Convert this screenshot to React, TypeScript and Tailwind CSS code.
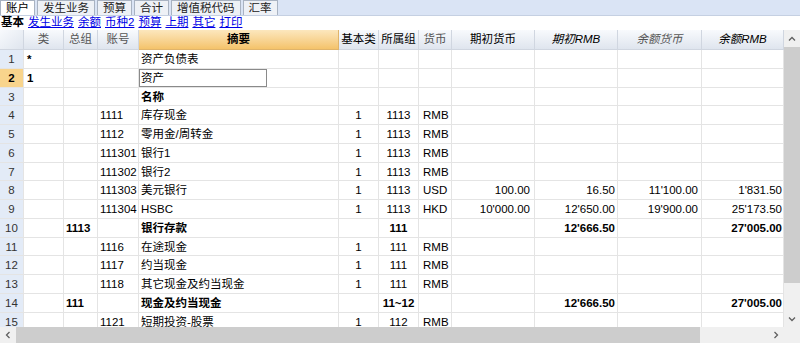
import React from "react";

type Row = {
  n: number;
  lei?: string;
  grp0?: string;
  acc?: string;
  desc?: string;
  bc?: string;
  grp?: string;
  cur?: string;
  op?: string;
  opR?: string;
  bal?: string;
  balR?: string;
  bold?: boolean;
  sel?: boolean;
};

const rows: Row[] = [
  { n: 1, lei: "*", desc: "资产负债表" },
  { n: 2, lei: "1", desc: "资产", sel: true },
  { n: 3, desc: "名称", bold: true },
  { n: 4, acc: "1111", desc: "库存现金", bc: "1", grp: "1113", cur: "RMB" },
  { n: 5, acc: "1112", desc: "零用金/周转金", bc: "1", grp: "1113", cur: "RMB" },
  { n: 6, acc: "111301", desc: "银行1", bc: "1", grp: "1113", cur: "RMB" },
  { n: 7, acc: "111302", desc: "银行2", bc: "1", grp: "1113", cur: "RMB" },
  {
    n: 8,
    acc: "111303",
    desc: "美元银行",
    bc: "1",
    grp: "1113",
    cur: "USD",
    op: "100.00",
    opR: "16.50",
    bal: "11'100.00",
    balR: "1'831.50",
  },
  {
    n: 9,
    acc: "111304",
    desc: "HSBC",
    bc: "1",
    grp: "1113",
    cur: "HKD",
    op: "10'000.00",
    opR: "12'650.00",
    bal: "19'900.00",
    balR: "25'173.50",
  },
  { n: 10, grp0: "1113", desc: "银行存款", grp: "111", opR: "12'666.50", balR: "27'005.00", bold: true },
  { n: 11, acc: "1116", desc: "在途现金", bc: "1", grp: "111", cur: "RMB" },
  { n: 12, acc: "1117", desc: "约当现金", bc: "1", grp: "111", cur: "RMB" },
  { n: 13, acc: "1118", desc: "其它现金及约当现金", bc: "1", grp: "111", cur: "RMB" },
  { n: 14, grp0: "111", desc: "现金及约当现金", grp: "11~12", opR: "12'666.50", balR: "27'005.00", bold: true },
  { n: 15, acc: "1121", desc: "短期投资-股票", bc: "1", grp: "112", cur: "RMB" },
];

const tabs = ["账户", "发生业务", "预算", "合计", "增值税代码", "汇率"];
const views = ["发生业务", "余额", "币种2", "预算", "上期", "其它", "打印"];

const cols = "grid grid-cols-[24px_40px_34px_41px_200px_40px_40px_33px_83px_83px_84px_82px]";
const cell = "border-r border-b border-[#e4e4e4] h-[18.75px] leading-[18px] whitespace-nowrap overflow-hidden";
const hcell =
  "border-r border-b border-[#d0d6e0] h-[20px] leading-[19px] text-center bg-gradient-to-b from-[#f8fafd] to-[#dfe5ee] whitespace-nowrap";

const App: React.FC = () => {
  return (
    <div
      className="w-[800px] h-[343px] bg-white flex flex-col overflow-hidden text-[11.5px] text-black"
      style={{ fontFamily: '"Liberation Sans", Arial, "Noto Sans CJK SC", sans-serif' }}
    >
      {/* tabs */}
      <div className="h-[16px] bg-[#dae4f5] border-b border-[#c5d0e2] flex items-end gap-[2px] pl-0">
        {tabs.map((t, i) => (
          <div
            key={t}
            className={`h-[15px] leading-[14px] px-[5px] border border-b-0 border-[#a9b3c2] ${
              i === 0 ? "bg-white" : "bg-[#eef1f6] text-[#222]"
            }`}
          >
            {t}
          </div>
        ))}
      </div>

      {/* sub views */}
      <div className="h-[14px] leading-[13px] flex gap-[4px] pl-[1px]">
        <span className="font-bold">基本</span>
        {views.map((v) => (
          <span key={v} className="text-[#0000e6] underline">
            {v}
          </span>
        ))}
      </div>

      <div className="flex-1 flex min-h-0">
        <div className="w-[784px] flex flex-col min-h-0">
          <div className="flex-1 overflow-hidden">
            {/* header */}
            <div className={cols}>
              <div className={`${hcell} bg-gradient-to-br from-[#eef3fa] to-[#d3deee]`}></div>
              <div className={`${hcell} text-[#555]`}>类</div>
              <div className={`${hcell} text-[#555]`}>总组</div>
              <div className={`${hcell} text-[#555]`}>账号</div>
              <div className="border-r border-b border-[#e0b46a] h-[20px] leading-[19px] text-center font-bold bg-gradient-to-b from-[#fce7bd] to-[#f4c36a]">
                摘要
              </div>
              <div className={hcell}>基本类</div>
              <div className={hcell}>所属组</div>
              <div className={`${hcell} text-[#555]`}>货币</div>
              <div className={hcell}>期初货币</div>
              <div className={`${hcell} italic`}>期初RMB</div>
              <div className={`${hcell} italic text-[#555]`}>余额货币</div>
              <div className={`${hcell} italic`}>余额RMB</div>
            </div>

            {rows.map((r) => (
              <div key={r.n} className={`${cols} ${r.bold ? "font-bold" : ""}`}>
                <div
                  className={`${cell} text-center border-[#cfd9e8] ${
                    r.sel ? "bg-[#f8d48c] font-bold" : "bg-[#e3ebf7] text-[#333] font-normal"
                  }`}
                >
                  {r.n}
                </div>
                <div className={`${cell} pl-[3px] font-bold`}>{r.lei}</div>
                <div className={`${cell} pl-[2px]`}>{r.grp0}</div>
                <div className={`${cell} pl-[2px]`}>{r.acc}</div>
                <div className={`${cell} pl-[2px]`}>
                  {r.sel ? (
                    <div className="w-[128px] -ml-[2px] h-full border border-[#8a8a8a] pl-[1px] leading-[16px]">
                      {r.desc}
                    </div>
                  ) : (
                    r.desc
                  )}
                </div>
                <div className={`${cell} text-center`}>{r.bc}</div>
                <div className={`${cell} text-center`}>{r.grp}</div>
                <div className={`${cell} pl-[4px]`}>{r.cur}</div>
                <div className={`${cell} text-right pr-[4px]`}>{r.op}</div>
                <div className={`${cell} text-right pr-[2px]`}>{r.opR}</div>
                <div className={`${cell} text-right pr-[3px]`}>{r.bal}</div>
                <div className={`${cell} text-right pr-[1px]`}>{r.balR}</div>
              </div>
            ))}
          </div>

          {/* horizontal scrollbar */}
          <div className="h-[16px] flex bg-[#f0f0f0] text-[#555]">
            <div className="w-[16px] flex items-center justify-center">
              <svg width="8" height="8" viewBox="0 0 8 8">
                <path d="M5.5 1 L2.5 4 L5.5 7" fill="none" stroke="#606060" strokeWidth="1.3" />
              </svg>
            </div>
            <div className="w-[684px] h-full bg-[#cdcdcd]"></div>
            <div className="flex-1"></div>
            <div className="w-[16px] flex items-center justify-center">
              <svg width="8" height="8" viewBox="0 0 8 8">
                <path d="M2.5 1 L5.5 4 L2.5 7" fill="none" stroke="#606060" strokeWidth="1.3" />
              </svg>
            </div>
          </div>
        </div>

        {/* vertical scrollbar */}
        <div className="w-[16px] flex flex-col">
          <div className="flex-1 flex flex-col bg-[#f0f0f0]">
            <div className="h-[17px] flex items-center justify-center">
              <svg width="8" height="8" viewBox="0 0 8 8">
                <path d="M1 5.5 L4 2.5 L7 5.5" fill="none" stroke="#606060" strokeWidth="1.3" />
              </svg>
            </div>
            <div className="h-[236px] bg-[#cdcdcd]"></div>
            <div className="flex-1"></div>
            <div className="h-[17px] flex items-center justify-center">
              <svg width="8" height="8" viewBox="0 0 8 8">
                <path d="M1 2.5 L4 5.5 L7 2.5" fill="none" stroke="#606060" strokeWidth="1.3" />
              </svg>
            </div>
          </div>
          <div className="h-[16px] bg-[#f0f0f0]"></div>
        </div>
      </div>
    </div>
  );
};

export default App;
